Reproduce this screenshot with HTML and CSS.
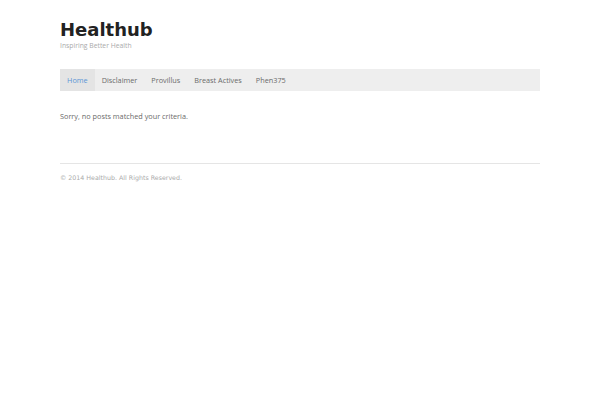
FILE: index.html
```html
<!DOCTYPE html>
<html lang="en">
<head>
  <meta charset="UTF-8">
  <title>Healthub | Inspiring Better Health</title>
  <link rel="stylesheet" href="styles.css">
</head>
<body>
  <div class="wrap">
    <header class="site-header">
      <h1 class="site-title">Healthub</h1>
      <p class="site-desc">Inspiring Better Health</p>
    </header>
    <nav class="main-nav">
      <a class="current" href="#">Home</a>
      <a href="#">Disclaimer</a>
      <a href="#">Provillus</a>
      <a href="#">Breast Actives</a>
      <a href="#">Phen375</a>
    </nav>
    <main class="content">
      <p>Sorry, no posts matched your criteria.</p>
    </main>
    <footer class="site-footer">
      <p>&copy; 2014 Healthub. All Rights Reserved.</p>
    </footer>
  </div>
</body>
</html>
```

FILE: styles.css
```css
* {
  box-sizing: border-box;
}
body {
  margin: 0;
  background: #fff;
  color: #6a6a6a;
  font-family: "Open Sans", sans-serif;
  font-size: 7.3px;
}
.wrap {
  width: 480px;
  margin: 0 auto;
}
.site-header {
  padding-top: 18px;
}
.site-title {
  margin: 0;
  font-family: "DejaVu Sans", sans-serif;
  font-size: 18px;
  font-weight: bold;
  line-height: 24px;
  color: #222;
}
.site-desc {
  margin: -1px 0 0;
  font-size: 6.8px;
  line-height: 10px;
  color: #aaa;
}
.main-nav {
  display: flex;
  margin-top: 18px;
  background: #eee;
  height: 22px;
}
.main-nav a {
  display: block;
  padding: 0 7px;
  line-height: 22px;
  color: #6a6a6a;
  text-decoration: none;
}
.main-nav a.current {
  background: #e4e4e4;
  color: #5b95d6;
}
.content {
  padding: 18px 0 40px;
}
.content p {
  margin: 0;
  line-height: 14px;
}
.site-footer {
  border-top: 1px solid #e5e5e5;
  padding-top: 9px;
}
.site-footer p {
  margin: 0;
  font-family: "DejaVu Sans", sans-serif;
  font-size: 6.3px;
  line-height: 10px;
  color: #aaa;
}
```
